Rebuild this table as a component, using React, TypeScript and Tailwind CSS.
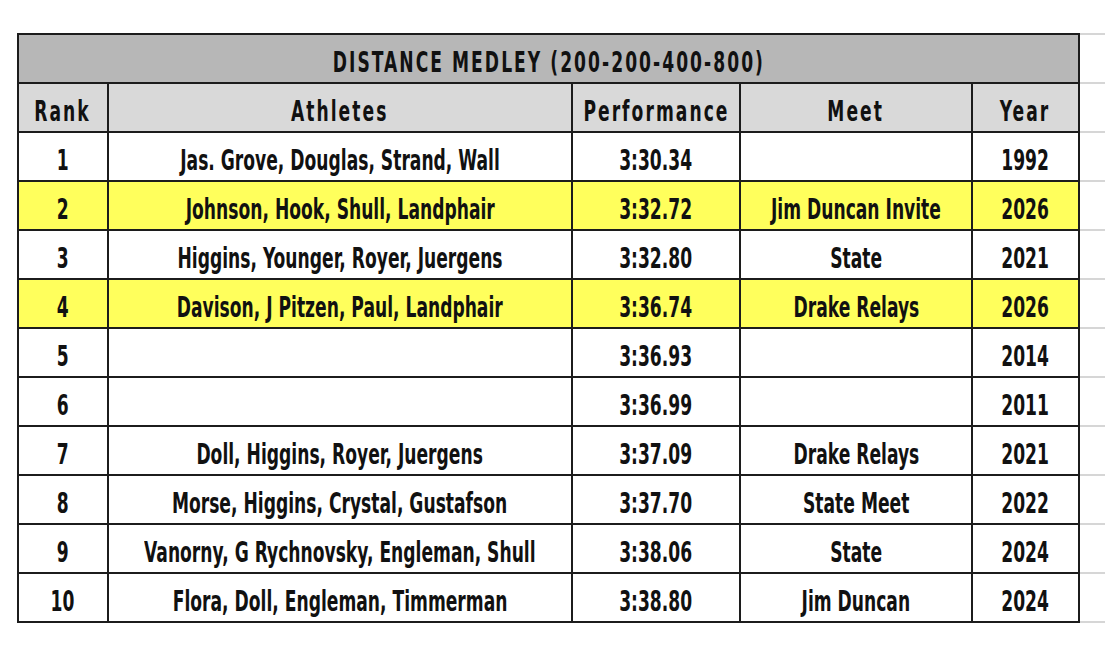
const rows = [
  { rank: 1, athletes: "Jas. Grove, Douglas, Strand, Wall", time: "3:30.34", meet: "", year: "1992", hi: false },
  { rank: 2, athletes: "Johnson, Hook, Shull, Landphair", time: "3:32.72", meet: "Jim Duncan Invite", year: "2026", hi: true },
  { rank: 3, athletes: "Higgins, Younger, Royer, Juergens", time: "3:32.80", meet: "State", year: "2021", hi: false },
  { rank: 4, athletes: "Davison, J Pitzen, Paul, Landphair", time: "3:36.74", meet: "Drake Relays", year: "2026", hi: true },
  { rank: 5, athletes: "", time: "3:36.93", meet: "", year: "2014", hi: false },
  { rank: 6, athletes: "", time: "3:36.99", meet: "", year: "2011", hi: false },
  { rank: 7, athletes: "Doll, Higgins, Royer, Juergens", time: "3:37.09", meet: "Drake Relays", year: "2021", hi: false },
  { rank: 8, athletes: "Morse, Higgins, Crystal, Gustafson", time: "3:37.70", meet: "State Meet", year: "2022", hi: false },
  { rank: 9, athletes: "Vanorny, G Rychnovsky, Engleman, Shull", time: "3:38.06", meet: "State", year: "2024", hi: false },
  { rank: 10, athletes: "Flora, Doll, Engleman, Timmerman", time: "3:38.80", meet: "Jim Duncan", year: "2024", hi: false },
];

// condensed look: DejaVu Sans Condensed squeezed horizontally, kept centred even when wider than the cell
function Txt({ children, head = false }: { children: React.ReactNode; head?: boolean }) {
  return (
    <div className="flex justify-center">
      <span
        className={
          head
            ? "shrink-0 origin-center scale-x-[0.68] whitespace-nowrap tracking-[3px]"
            : "shrink-0 origin-center scale-x-[0.68] whitespace-nowrap"
        }
      >
        {children}
      </span>
    </div>
  );
}

const cell = "border-2 border-[#1c1c1c] h-[49px] p-0 pt-[8px] text-center align-middle";
const side = "h-[49px] border-y-2 border-[#d6d6d6] p-0";

export default function App() {
  return (
    <div className="min-h-[651px] w-[1105px] bg-white pt-[33px] pl-[17px] font-['DejaVu_Sans_Condensed','DejaVu_Sans',sans-serif] text-[28px] font-bold leading-none text-[#111]">
      <table className="w-[1088px] table-fixed border-collapse">
        <colgroup>
          <col className="w-[90px]" />
          <col className="w-[464px]" />
          <col className="w-[168px]" />
          <col className="w-[232px]" />
          <col className="w-[107px]" />
          <col className="w-[27px]" />
        </colgroup>
        <thead>
          <tr>
            <th colSpan={5} className={`${cell} bg-[#b7b7b7]`}>
              <Txt head>DISTANCE MEDLEY (200-200-400-800)</Txt>
            </th>
            <td className={side} />
          </tr>
          <tr className="bg-[#d9d9d9]">
            <th className={cell}><Txt head>Rank</Txt></th>
            <th className={cell}><Txt head>Athletes</Txt></th>
            <th className={cell}><Txt head>Performance</Txt></th>
            <th className={cell}><Txt head>Meet</Txt></th>
            <th className={cell}><Txt head>Year</Txt></th>
            <td className={`${side} bg-white`} />
          </tr>
        </thead>
        <tbody>
          {rows.map((r) => (
            <tr key={r.rank} className={r.hi ? "bg-[#ffff5c]" : "bg-white"}>
              <td className={cell}><Txt>{r.rank}</Txt></td>
              <td className={cell}><Txt>{r.athletes}</Txt></td>
              <td className={cell}><Txt>{r.time}</Txt></td>
              <td className={cell}><Txt>{r.meet}</Txt></td>
              <td className={cell}><Txt>{r.year}</Txt></td>
              <td className={`${side} bg-white`} />
            </tr>
          ))}
        </tbody>
      </table>
    </div>
  );
}
